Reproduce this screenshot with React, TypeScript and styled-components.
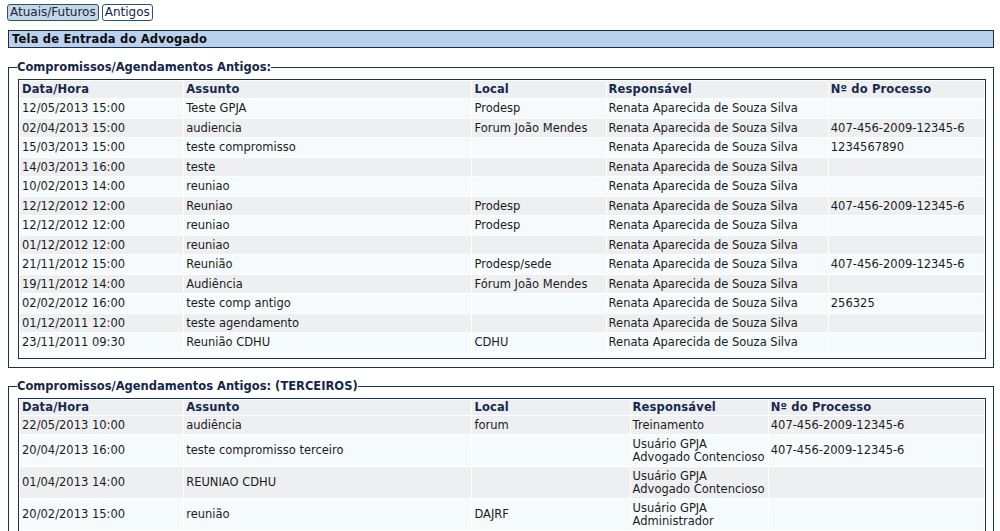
import React from "react";
import styled, { createGlobalStyle } from "styled-components";

const Global = createGlobalStyle`
  html, body { margin: 0; padding: 0; background: #ffffff; }
  body { font-family: "DejaVu Sans", Verdana, sans-serif; font-size: 11.5px; color: #1b1b1b; }
`;

const Page = styled.div`
  padding: 4px 6px 0 7px;
`;

const Tabs = styled.div`
  display: flex;
  gap: 3px;
  height: 17px;
`;

const TabButton = styled.button<{ $active?: boolean }>`
  font-family: "DejaVu Sans", Verdana, sans-serif;
  font-size: 12px;
  line-height: 13px;
  height: 17px;
  padding: 0 2px;
  margin: 0;
  border: 1px solid #2c5468;
  border-radius: 3px;
  color: #14264a;
  background: ${(p) => (p.$active ? "#c6d7e4" : "#ffffff")};
  cursor: pointer;
`;

const TitleBar = styled.div`
  margin: 9px 0 0 1px;
  height: 16px;
  border: 1px solid #1a2d4d;
  background: #b9d1ec;
  font-weight: bold;
  line-height: 16px;
  padding-left: 3px;
  letter-spacing: 0.2px;
  color: #0b0b0b;
`;

const Fieldset = styled.fieldset<{ $top: number }>`
  margin: ${(p) => p.$top}px 0 0 1px;
  padding: 5px 7px 8px 9px;
  border: 1px solid #123a3a;
  min-width: 0;
`;

const Legend = styled.legend`
  font-weight: bold;
  color: #14264a;
  padding: 0;
  margin-left: -1px;
  line-height: 13px;
`;

const Table = styled.table<{ $padBottom: number }>`
  width: 100%;
  table-layout: fixed;
  border: 1px solid #1b2f5b;
  border-collapse: separate;
  border-spacing: 1px;
  padding: 0 0 ${(p) => p.$padBottom}px 0;
  background: #ffffff;
`;

const HeadCell = styled.th<{ $tight?: boolean }>`
  text-align: left;
  font-weight: bold;
  color: #17294c;
  background: #eeeff1;
  padding: ${(p) => (p.$tight ? "2px 2px 2px" : "3px 2px 3px")};
  line-height: 11px;
  letter-spacing: 0.15px;
`;

const Row = styled.tr<{ $shade: boolean }>`
  background: ${(p) => (p.$shade ? "#eeeff1" : "#f5fbfc")};
`;

const Cell = styled.td`
  padding: 3px 2px 3px;
  line-height: 12.5px;
  vertical-align: middle;
  white-space: nowrap;
  overflow: hidden;
  color: #1b1b1b;
`;

type Rec = string[];

const antigos: Rec[] = [
  ["12/05/2013 15:00", "Teste GPJA", "Prodesp", "Renata Aparecida de Souza Silva", ""],
  ["02/04/2013 15:00", "audiencia", "Forum João Mendes", "Renata Aparecida de Souza Silva", "407-456-2009-12345-6"],
  ["15/03/2013 15:00", "teste compromisso", "", "Renata Aparecida de Souza Silva", "1234567890"],
  ["14/03/2013 16:00", "teste", "", "Renata Aparecida de Souza Silva", ""],
  ["10/02/2013 14:00", "reuniao", "", "Renata Aparecida de Souza Silva", ""],
  ["12/12/2012 12:00", "Reuniao", "Prodesp", "Renata Aparecida de Souza Silva", "407-456-2009-12345-6"],
  ["12/12/2012 12:00", "reuniao", "Prodesp", "Renata Aparecida de Souza Silva", ""],
  ["01/12/2012 12:00", "reuniao", "", "Renata Aparecida de Souza Silva", ""],
  ["21/11/2012 15:00", "Reunião", "Prodesp/sede", "Renata Aparecida de Souza Silva", "407-456-2009-12345-6"],
  ["19/11/2012 14:00", "Audiência", "Fórum João Mendes", "Renata Aparecida de Souza Silva", ""],
  ["02/02/2012 16:00", "teste comp antigo", "", "Renata Aparecida de Souza Silva", "256325"],
  ["01/12/2011 12:00", "teste agendamento", "", "Renata Aparecida de Souza Silva", ""],
  ["23/11/2011 09:30", "Reunião CDHU", "CDHU", "Renata Aparecida de Souza Silva", ""],
];

const terceiros: Rec[] = [
  ["22/05/2013 10:00", "audiência", "forum", "Treinamento", "407-456-2009-12345-6"],
  ["20/04/2013 16:00", "teste compromisso terceiro", "", "Usuário GPJA\nAdvogado Contencioso", "407-456-2009-12345-6"],
  ["01/04/2013 14:00", "REUNIAO CDHU", "", "Usuário GPJA\nAdvogado Contencioso", ""],
  ["20/02/2013 15:00", "reunião", "DAJRF", "Usuário GPJA\nAdministrador", ""],
  ["15/02/2013 10:00", "reunião", "", "Usuário GPJA\nAdministrador", ""],
];

const headers = ["Data/Hora", "Assunto", "Local", "Responsável", "Nº do Processo"];

function DataTable({ rows, widths, startShaded, padBottom, tightHead }: { rows: Rec[]; widths: number[]; startShaded: boolean; padBottom: number; tightHead?: boolean }) {
  return (
    <Table $padBottom={padBottom}>
      <colgroup>
        {widths.map((w, i) => (
          <col key={i} style={{ width: w }} />
        ))}
      </colgroup>
      <thead>
        <tr>
          {headers.map((h) => (
            <HeadCell key={h} $tight={tightHead}>{h}</HeadCell>
          ))}
        </tr>
      </thead>
      <tbody>
        {rows.map((r, i) => (
          <Row key={i} $shade={startShaded ? i % 2 === 0 : i % 2 === 1}>
            {r.map((c, j) => (
              <Cell key={j}>
                {c.split("\n").map((line, k, arr) => (
                  <React.Fragment key={k}>
                    {line}
                    {k < arr.length - 1 && <br />}
                  </React.Fragment>
                ))}
              </Cell>
            ))}
          </Row>
        ))}
      </tbody>
    </Table>
  );
}

export default function App() {
  return (
    <Page>
      <Global />
      <Tabs>
        <TabButton $active>Atuais/Futuros</TabButton>
        <TabButton>Antigos</TabButton>
      </Tabs>
      <TitleBar>Tela de Entrada do Advogado</TitleBar>
      <Fieldset $top={13}>
        <Legend>Compromissos/Agendamentos Antigos:</Legend>
        <DataTable rows={antigos} widths={[163, 287, 133, 221, 155]} startShaded={false} padBottom={5} />
      </Fieldset>
      <Fieldset $top={12}>
        <Legend>Compromissos/Agendamentos Antigos: (TERCEIROS)</Legend>
        <DataTable rows={terceiros} widths={[163, 287, 157, 137, 215]} startShaded={true} padBottom={6} tightHead />
      </Fieldset>
    </Page>
  );
}
